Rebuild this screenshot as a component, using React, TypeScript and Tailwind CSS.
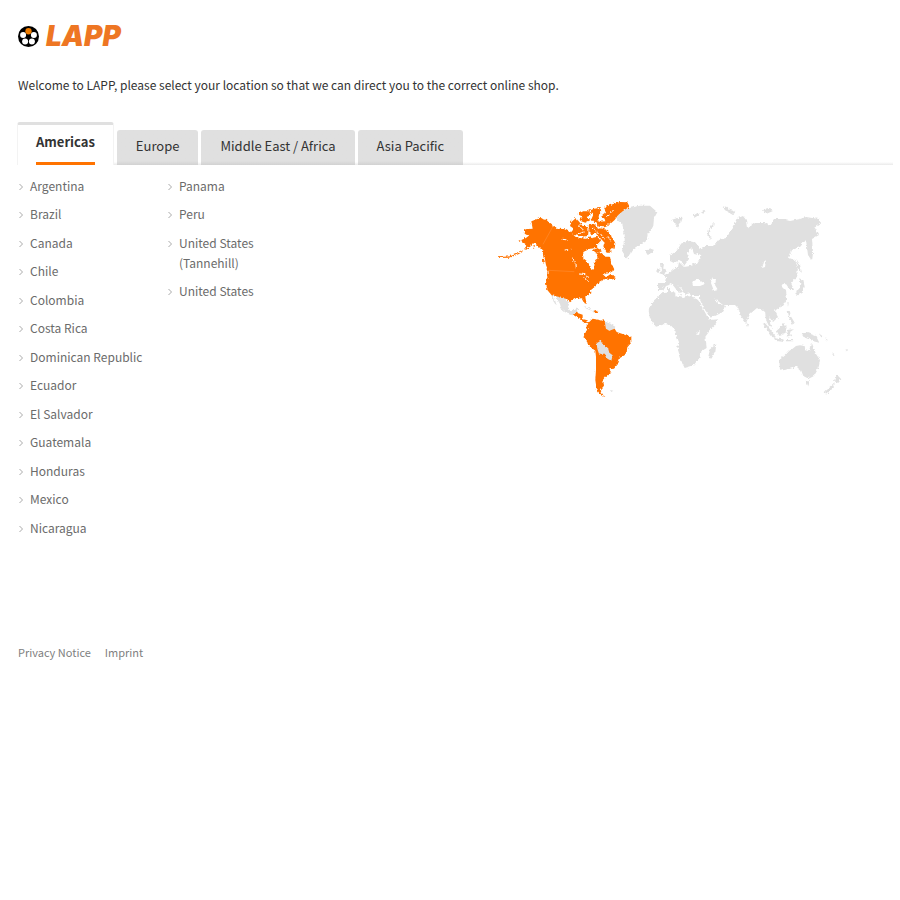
import { useState } from "react";

const regions = ["Americas", "Europe", "Middle East / Africa", "Asia Pacific"];

const countryColumns = [
  [
    "Argentina",
    "Brazil",
    "Canada",
    "Chile",
    "Colombia",
    "Costa Rica",
    "Dominican Republic",
    "Ecuador",
    "El Salvador",
    "Guatemala",
    "Honduras",
    "Mexico",
    "Nicaragua",
  ],
  ["Panama", "Peru", "United States (Tannehill)", "United States"],
];

function Logo() {
  return (
    <a href="#" aria-label="LAPP" className="flex items-center gap-[7px]">
      <svg viewBox="0 0 42 42" className="h-[21px] w-[21px]">
        <circle cx="21" cy="21" r="21" fill="#000" />
        <circle cx="21" cy="10.5" r="6.3" fill="#f07d00" />
        <g fill="#fff">
          <circle cx="10.2" cy="18" r="6" />
          <circle cx="31.8" cy="18" r="6" />
          <circle cx="14.2" cy="31" r="6" />
          <circle cx="27.8" cy="31" r="6" />
        </g>
      </svg>
      <span className="font-['Inter',sans-serif] text-[28px] leading-[30px] font-black text-[#ee7623] italic">
        LAPP
      </span>
    </a>
  );
}

function WorldMap() {
  return (
    <svg
      viewBox="499 201 352 200"
      role="img"
      aria-label="World map"
      className="w-full max-w-[352px] overflow-visible"
    >
      <defs>
        <filter
          id="coast"
          x="-5%"
          y="-5%"
          width="110%"
          height="110%"
          colorInterpolationFilters="sRGB"
        >
          <feTurbulence baseFrequency="0.3" numOctaves="2" seed="4" />
          <feDisplacementMap in="SourceGraphic" scale="3" xChannelSelector="R" yChannelSelector="G" />
          <feGaussianBlur stdDeviation="0.3" />
        </filter>
      </defs>

      <g fill="#e0e0e0" filter="url(#coast)">
        {/* Greenland, Iceland, Arctic islands, Britain */}
        <g transform="translate(610 195) scale(0.3333)">
          <path d="M18 64L40 46L62 38L90 32L120 32L142 52L132 70L130 92L122 108L112 122L112 136L92 150L70 164L60 180L50 192L42 184L36 166L44 148L44 120L40 100L36 86L22 76Z" />
          <path d="M107 166L130 163L132 174L116 180Z" />
          <path d="M186 74L200 70L218 68L214 80L204 98L196 88Z" />
          <path d="M250 62L262 54L270 60L256 68ZM272 52L286 48L284 56Z" />
          <path d="M338 36L352 38L362 50L346 46ZM364 46L376 50L374 58Z" />
          <path d="M153 206L162 208L160 218L170 230L166 238L150 238L156 226ZM143 222L152 220L150 232L142 234Z" />
          <path d="M312 84L304 92L296 106L292 124L306 134L300 118L302 104L314 90Z" />
        </g>

        {/* Eurasia */}
        <path d="M658 291L658 283L666 283L667 278L663 275L668 274L673 270L678 267L679 262L684 267L690 266L697 264L700 259L702 256L694 254L692 248L688 253L689 259L684 266L681 260L674 263L670 261L670 256L676 252L681 244L689 241L697 243L700 250L706 246L714 246L719 240L726 238L733 228L738 218L743 216L747 221L748 228L755 223L765 223L770 226L775 219L782 219L790 221L800 219L806 217L819 219L821 224L815 228L819 235L812 239L813 253L812 261L808 255L806 240L800 247L792 250L789 258L795 260L798 268L797 278L791 283L794 290L790 290L786 284L781 286L786 291L787 300L783 306L777 309L775 311L778 317L773 322L769 317L773 329L769 326L766 320L765 312L761 309L757 308L750 314L746 323L741 316L738 308L735 305L723 305L714 298L719 304L726 306L723 312L711 318L705 310L700 300L700 296L691 296L689 292L686 296L682 289L678 285L683 292L679 293L672 284L666 286L663 291Z" />
        <path d="M746 322L749 324L748 327ZM668 288L671 288L671 293L668 293ZM678 294L682 294L681 296Z" />
        <path d="M763 210L770 209L773 211L766 214Z" />
        <path d="M723 206L728 209L735 212L734 215L725 210Z" />
        <path d="M797 260L800 265L802 273L798 268Z" />

        {/* Africa and Madagascar */}
        <g transform="translate(640 280) scale(0.3333)">
          <path d="M66 40L100 36L106 38L106 48L130 54L146 48L168 56L176 62L188 84L200 106L210 120L236 118L226 136L208 154L196 170L200 204L184 214L182 232L164 256L134 264L126 248L114 210L118 188L108 166L106 150L92 136L76 132L48 140L30 116L26 92L40 66L56 52Z" />
          <path d="M229 192L226 216L214 236L205 230L210 208Z" />
        </g>

        {/* Australia, Oceania and the islands of south-east Asia */}
        <g transform="translate(740 280) scale(0.3333)">
          <path d="M118 240L120 272L146 268L170 260L184 272L190 288L206 296L222 288L236 264L240 240L228 222L216 190L210 214L196 210L194 198L180 196L168 198L156 208L148 212L136 226Z" />
          <path d="M197 304L210 304L204 320Z" />
          <path d="M291 284L304 298L292 312L285 304ZM284 310L282 322L258 344L254 336Z" />
          <path d="M184 160L202 158L228 168L238 188L220 184L206 176L190 170Z" />
          <path d="M110 152L132 132L140 140L136 162L118 168Z" />
          <path d="M68 130L80 134L108 172L98 172ZM102 174L130 178L132 186L106 182Z" />
          <path d="M142 150L162 148L150 156L158 170L150 166L144 174Z" />
          <path d="M143 92L150 94L152 108L164 128L158 134L148 114ZM142 70L146 70L144 80Z" />
          <path d="M166 40L180 30L184 10L176 -2L190 2L194 20L188 38L170 48Z" />
          <path d="M138 180L160 180L160 184L138 184ZM236 160L250 170L244 172ZM256 174L266 182L262 184Z" />
          <path d="M276 220L284 226L280 228ZM316 212L324 210L320 216Z" />
        </g>

        {/* Countries of the Americas without a shop */}
        <g transform="translate(540 290) scale(0.3333)">
          <path d="M44 14L62 20L76 26L88 38L84 54L92 64L104 62L108 56L118 56L110 72L98 76L78 68L64 58L60 42ZM34 16L40 16L50 46L42 38Z" />
          <path d="M130 50L150 56L156 62L140 56ZM158 62L166 60L166 68L158 68Z" />
          <path d="M192 94L208 100L226 110L222 122L200 120Z" />
          <path d="M210 300L220 302L214 306Z" />
        </g>
      </g>

      {/* Inland seas and lakes */}
      <g fill="#fff" filter="url(#coast)">
        <path d="M692 282L698 279L705 284L700 286L693 286Z" />
        <path d="M712 278L716 280L715 285L718 290L714 291L711 283Z" />
        <path d="M764 262L766 260L765 267L762 268ZM696 334L700 331L699 335Z" />
      </g>

      <g fill="#ff7300" filter="url(#coast)">
        {/* North America */}
        <g transform="translate(490 190) scale(0.3333)">
          <path d="M124 94L150 84L170 90L182 103L200 116L222 117L244 128L256 140L270 144L288 146L304 142L320 156L322 174L300 176L280 186L280 208L298 222L304 240L312 238L314 218L322 206L322 190L336 190L346 200L360 200L364 220L374 240L360 248L340 254L348 262L362 252L380 264L362 270L344 268L330 276L315 290L303 300L304 310L286 322L290 342L284 340L276 325L255 326L240 337L232 328L205 320L185 316L172 300L168 280L172 262L176 246L168 225L164 205L160 185L150 174L135 160L118 172L108 180L85 193L60 203L26 204L26 202L60 199L85 189L105 178L112 168L98 160L94 150L108 144L118 136L104 132L106 118L128 116Z" />
          <path d="M244 96L258 84L270 98L278 108L290 108L296 120L294 138L276 140L250 134L242 128L252 116L240 108Z" />
          <path d="M262 72L280 64L298 64L302 76L288 82L302 90L286 98L270 92L278 80Z" />
          <path d="M298 62L312 56L332 54L334 70L326 78L328 94L314 100L304 88L310 74Z" />
          <path d="M358 46L390 36L412 37L419 50L398 64L384 76L374 90L358 104L346 98L344 86L334 80L348 68L342 56Z" />
          <path d="M296 106L312 102L322 112L320 130L304 136L298 124Z" />
          <path d="M320 96L344 94L358 106L344 112L326 110Z" />
          <path d="M320 114L340 116L354 124L366 140L376 160L374 176L364 174L364 188L350 188L340 172L344 158L334 148L324 138Z" />
          <path d="M306 144L322 140L334 154L322 166Z" />
          <path d="M308 180L324 174L336 184L320 190Z" />
          <path d="M128 170L136 168L132 176ZM86 150L92 152L88 156ZM160 206L166 216L162 220L156 208Z" />
        </g>

        {/* Central and South America */}
        <g transform="translate(540 290) scale(0.3333)">
          <path d="M101 76L110 68L128 74L128 90L142 94L146 98L134 100L118 86Z" />
          <path d="M162 62L172 60L176 68L164 70Z" />
          <path d="M144 100L158 86L180 90L194 94L198 116L208 122L224 116L230 126L248 132L274 142L274 158L262 172L260 192L240 204L234 222L222 236L208 238L214 248L198 262L190 272L192 290L182 302L190 316L198 322L182 316L170 298L166 270L168 240L168 200L166 182L150 170L136 148L132 136L142 118Z" />
        </g>
      </g>

      {/* Lakes, straits and the Bolivia / Paraguay gap */}
      <g filter="url(#coast)">
        <g transform="translate(540 290) scale(0.3333)" fill="#e0e0e0">
          <path d="M170 160L182 152L190 166L204 174L208 188L218 196L214 212L202 206L198 194L178 194L172 176Z" />
        </g>
        <g transform="translate(490 190) scale(0.3333)" fill="none" stroke="#fff" strokeWidth="3">
          <path d="M218 148L234 150M224 180L244 178M248 204L254 220M258 220L259 236M270 252L286 254M284 262L298 276M290 256L298 264M266 106L280 120M332 132L344 148M264 132L284 126M352 80L372 62M310 114L316 124M354 142L362 154" />
        </g>
      </g>
      <g transform="translate(490 190) scale(0.3333)" fill="none" stroke="#ff9440" strokeWidth="1.5">
        <path d="M192 112L162 166M178 244L256 248" />
      </g>
    </svg>
  );
}

export default function App() {
  const [activeRegion, setActiveRegion] = useState("Americas");

  return (
    <div className="min-h-screen bg-white px-[18px] pt-[21px] font-['Noto_Sans_CJK_SC',sans-serif] text-[#333]">
      <header className="flex">
        <Logo />
      </header>

      <main>
        <p className="mt-6 text-[12px] leading-5">
          Welcome to LAPP, please select your location so that we can direct you to the correct
          online shop.
        </p>

        <div
          role="tablist"
          className="mt-[27px] -mr-[11px] -ml-px flex items-end gap-[3px] bg-linear-to-t from-[#eaeaea] to-transparent to-[3px]"
        >
          {regions.map((region) =>
            region === activeRegion ? (
              <button
                key={region}
                role="tab"
                aria-selected="true"
                className="h-[43px] rounded-t-[3px] border-x border-t-[3px] border-x-[#f3f3f3] border-t-[#e0e0e0] bg-white px-[18px] text-[13px] font-bold"
              >
                <span className="block h-10 border-b-3 border-[#ff7300] leading-[34px]">
                  {region}
                </span>
              </button>
            ) : (
              <button
                key={region}
                role="tab"
                aria-selected="false"
                onClick={() => setActiveRegion(region)}
                className="h-[35px] rounded-t-[3px] bg-[#e0e0e0] bg-linear-to-t from-[#d2d2d2] to-[#e0e0e0] to-[4px] px-[19px] pb-[3px] text-[13px] leading-8"
              >
                {region}
              </button>
            )
          )}
        </div>

        <div className="flex items-start justify-between pt-[11px]">
          <div className="flex shrink-0">
            {countryColumns.map((countries, i) => (
              <ul key={i} className="w-[149px]">
                {countries.map((country) => (
                  <li key={country} className="odd:pb-2 even:pb-[9px]">
                    <a
                      href="#"
                      className="flex items-start text-[12px] leading-5 text-[#6b6b6b]"
                    >
                      <svg
                        viewBox="0 0 12 20"
                        className="h-5 w-3 shrink-0"
                        fill="none"
                        stroke="#aaa"
                      >
                        <path d="M1.5 8L4.5 11L1.5 14" />
                      </svg>
                      <span className={i === 1 ? "max-w-[90px]" : "whitespace-nowrap"}>
                        {country}
                      </span>
                    </a>
                  </li>
                ))}
              </ul>
            ))}
          </div>

          <div className="mt-6 mr-8 ml-4 w-[352px]">
            <WorldMap />
          </div>
        </div>
      </main>

      <footer className="mt-24 flex gap-[14px] pb-6 text-[11px] leading-5 text-[#808080]">
        <a href="#">Privacy Notice</a>
        <a href="#">Imprint</a>
      </footer>
    </div>
  );
}
